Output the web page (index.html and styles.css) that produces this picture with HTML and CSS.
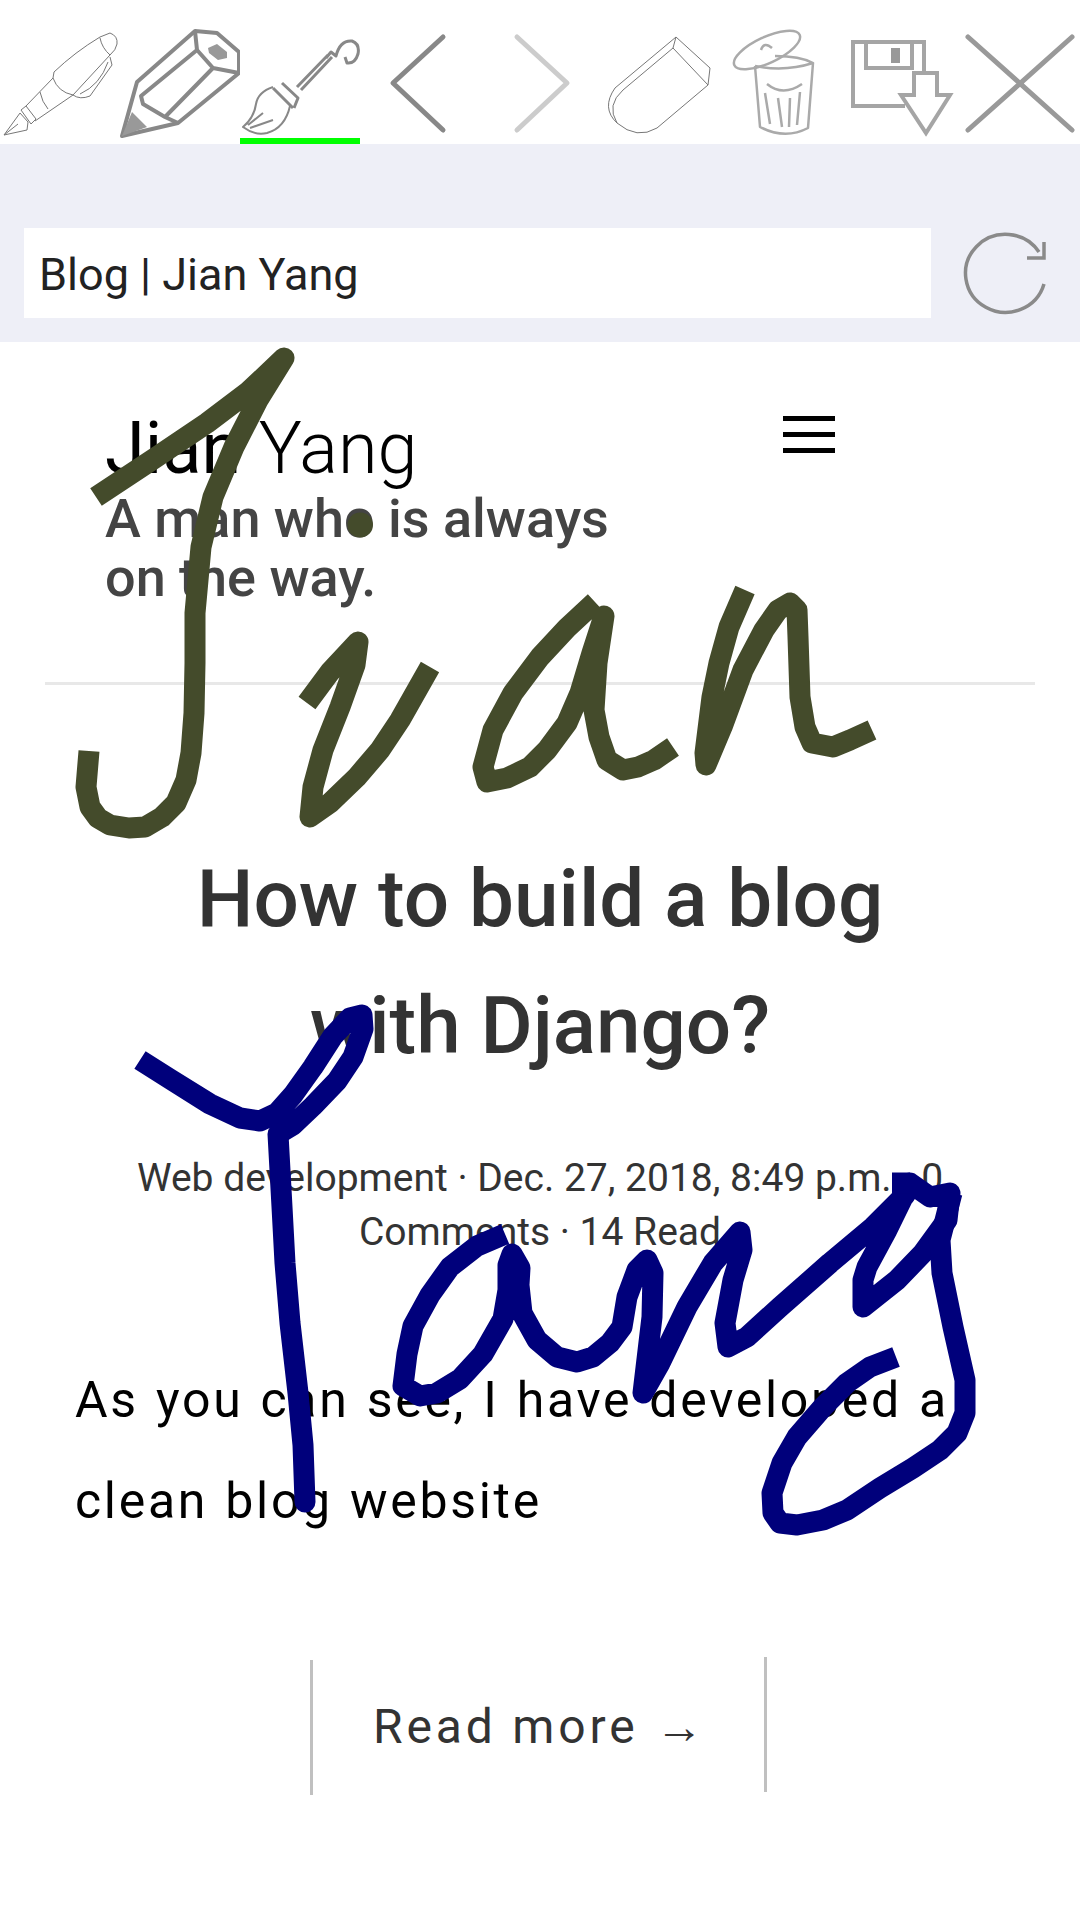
FILE: index.html
```html
<!DOCTYPE html>
<html>
<head>
    <title>Blog | Jian Yang</title>
    <link rel="stylesheet" href="styles.css">
</head>
<body>
    <div id="toolbar">
        <!-- pen -->
        <svg class="tool thin" viewBox="0 0 120 144">
            <path d="M4 135 L20 113 L28 122 L27 130 Z M4 135 L18 124 M21 110 L26 106 L36 119 L31 124 Z M26 106 L53 78 M35 121 L73 95"/>
            <path d="M40 92 Q42 102 48 109 M53 78 L54 72 Q75 52 100 37 L110 33 Q118 36 117 44 Q116 50 110 55 L73 95 Q58 92 53 78"/>
            <path d="M100 38 Q102 48 110 55 M110 57 L112 65 L90 96 Q80 100 73 95 M108 62 Q100 85 80 94"/>
        </svg>
        <!-- pencil -->
        <svg class="tool thick" viewBox="120 0 120 144">
            <path d="M195 31 L217 33 L239 52 L239 73 L178 123 L122 136 L137 82 Z"/>
            <path d="M195 31 L197 50 L213 68 L239 73 M197 50 L141 96 L143 104 L165 117 L178 123 M213 68 L165 117"/>
            <path class="solid" d="M122 136 L132 112 L147 127 Z M208 48 L217 44 L227 52 L227 58 L218 60 L209 53 Z"/>
        </svg>
        <!-- brush -->
        <svg class="tool brush" viewBox="240 0 120 144">
            <path d="M328 55 L297 87 M332 57 L301 90 M326 58 L331 52 L336 56 Q340 40 352 41 Q360 44 358 54 Q355 64 347 63 L345 57"/>
            <path d="M273 88 L293 108 M282 83 L298 98 L294 108"/>
            <path class="head" d="M273 87 Q258 92 256 104 Q254 118 243 127 Q255 136 267 133 Q285 128 290 106 M248 125 L263 113 M250 128 L273 120"/>
        </svg>
        <!-- back -->
        <svg class="tool arrow" viewBox="360 0 120 144">
            <path d="M443 37 L393 83 L443 130"/>
        </svg>
        <!-- forward -->
        <svg class="tool arrow off" viewBox="480 0 120 144">
            <path d="M517 37 L567 83 L517 130"/>
        </svg>
        <!-- eraser -->
        <svg class="tool thin" viewBox="600 0 120 144">
            <path d="M676 37 L710 68 L708 85 L657 128 Q637 140 617 123 Q601 108 615 88 Z"/>
            <path d="M676 37 L673 48 L708 85 M673 48 L623 90 Q606 105 617 123"/>
        </svg>
        <!-- trash -->
        <svg class="tool trash" viewBox="720 0 120 144">
            <ellipse cx="767" cy="50" rx="36" ry="13" transform="rotate(-25 767 50)"/>
            <path d="M761 50 Q764 41 772 48 M755 66 Q785 72 813 63 Q800 56 775 56 M755 66 L760 127 Q785 140 808 128 L813 63"/>
            <path d="M767 84 Q783 97 802 84 M765 93 L770 124 M778 98 L782 127 M790 98 L789 127 M800 92 L797 125"/>
        </svg>
        <!-- save -->
        <svg class="tool save" viewBox="840 0 120 144">
            <path d="M905 106 L853 106 L853 42 L924 42 L924 72 M866 42 L866 68 L912 68 L912 42"/>
            <path d="M914 73 L937 73 L937 95 L950 95 L926 133 L901 95 L914 95 Z"/>
            <rect class="solid" x="891" y="48" width="9" height="15"/>
        </svg>
        <!-- close -->
        <svg class="tool close" viewBox="960 0 120 144">
            <path d="M968 37 L1072 130 M1072 37 L968 130"/>
        </svg>
        <div id="tool-mark"></div>
    </div>

    <div id="address-band">
        <div id="address">Blog | Jian Yang</div>
        <svg id="reload" viewBox="955 222 100 100">
            <path d="M1045 284 A40 39 0 1 1 1040 252 M1045 242 L1045 258 L1028 258"/>
        </svg>
    </div>

    <div id="site-header">
        <div id="brand">
            <h1><b>Jian</b> Yang</h1>
            <p>A man who is always on the way.</p>
        </div>
        <div id="menu-button">
            <span></span>
            <span></span>
            <span></span>
        </div>
    </div>
    <hr id="divider">

    <div id="post">
        <h2>How to build a blog with Django?</h2>
        <p id="post-meta">Web development · Dec. 27, 2018, 8:49 p.m. · 0 Comments · 14 Read</p>
        <p id="post-text">As you can see, I have developed a clean blog website</p>
        <div id="read-more">
            <span class="rule left"></span>
            <span class="label">Read more <i>→</i></span>
            <span class="rule right"></span>
        </div>
    </div>

    <!-- handwriting drawn on top of the page -->
    <svg id="ink" viewBox="0 0 1080 1920">
        <g class="olive">
            <path d="M96 497 L155 458 L207 423 L248 392 L284 358 L258 400 L234 447 L213 497 L201 547 L195 613 L195 663 L194 713 L191 753 L186 780 L176 803 L162 817 L145 827 L129 828 L110 825 L98 818 L90 807 L86 787 L89 751"/>
            <path class="dot" d="M360 525 L360.5 525"/>
            <path d="M307 703 L330 672 L358 642 L355 665 L340 707 L323 750 L313 787 L310 817 L330 803 L357 777 L380 750 L400 720 L430 667"/>
            <path d="M595 602 L567 628 L540 657 L513 693 L493 730 L483 767 L487 782 L507 778 L530 767 L547 750 L567 723 L580 693 L592 653 L604 616 L597 663 L594 710 L599 737 L607 760 L623 770 L638 767 L654 760 L673 747"/>
            <path d="M745 590 L729 627 L719 663 L712 697 L705 753 L706 765 L722 727 L743 670 L764 630 L778 610 L790 603 L797 610 L798 637 L800 697 L805 727 L812 743 L833 747 L850 740 L872 730"/>
        </g>
        <g class="navy">
            <path d="M140 1060 L170 1079 L210 1104 L240 1118 L260 1121 L277 1113 L293 1095 L313 1067 L333 1036 L350 1018 L362 1015 L363 1029 L353 1057 L337 1081 L313 1106 L293 1125 L278 1134"/>
            <path class="round" d="M278 1134 L282 1207 L285 1263 L290 1323 L298 1393 L303 1445 L305 1502"/>
            <path d="M505 1234 L477 1246 L450 1267 L430 1295 L413 1326 L407 1354 L403 1386 L420 1396 L437 1393 L460 1379 L483 1354 L503 1319 L508 1290 L508 1265 L512 1254 L520 1268 L519 1285 L522 1313 L537 1340 L557 1357 L577 1362 L593 1357 L610 1343 L622 1327 L627 1297 L637 1270 L647 1260 L653 1273 L652 1317 L643 1393 L660 1363 L687 1307 L713 1263 L740 1232 L742 1250 L733 1280 L725 1323 L728 1347 L747 1337 L780 1307 L830 1263 L873 1227 L905 1195 L910 1183 L930 1197 L950 1193 L947 1220 L923 1253 L897 1280 L863 1307 L863 1280 L867 1267 L887 1230 L910 1183"/>
            <path d="M892 1183 L910 1183"/>
            <path d="M952 1193 L940 1240 L942 1273 L953 1327 L965 1380 L965 1413 L957 1433 L940 1450 L913 1468 L880 1488 L847 1510 L823 1520 L797 1525 L780 1523 L773 1513 L772 1493 L782 1463 L797 1437 L823 1407 L847 1383 L870 1367 L896 1357"/>
        </g>
    </svg>
</body>
</html>
```

FILE: styles.css
```css
body {
    font-family: Roboto, "Liberation Sans", sans-serif;
    margin: 0;
    padding: 0;
    position: relative;
    width: 1080px;
    height: 1920px;
    overflow: hidden;
    background-color: white;
}
#toolbar {
    display: flex;
    position: relative;
    height: 144px;
}
.tool {
    width: 120px;
    height: 144px;
    flex: none;
    fill: none;
    stroke: #888;
    stroke-linejoin: round;
}
.tool .solid {
    fill: #999;
    stroke: none;
}
.tool.thin {
    stroke: #777;
    stroke-width: 1;
}
.tool.thick {
    stroke-width: 4;
}
.tool.brush {
    stroke-width: 3;
}
.tool.brush .head {
    stroke-width: 2;
}
.tool.arrow {
    stroke-width: 5;
    stroke-linecap: round;
}
.tool.arrow.off {
    stroke: #ccc;
}
.tool.trash {
    stroke: #aaa;
    stroke-width: 2.5;
}
.tool.save {
    stroke: #a5a5a5;
    stroke-width: 4;
    stroke-linejoin: miter;
}
.tool.close {
    stroke: #999;
    stroke-width: 5;
    stroke-linecap: round;
}
#tool-mark {
    position: absolute;
    left: 240px;
    bottom: 0;
    width: 120px;
    height: 6px;
    background-color: #00ff00;
}
#address-band {
    display: flex;
    height: 198px;
    box-sizing: border-box;
    padding: 84px 0 0 24px;
    background-color: #eeeff7;
}
#address {
    width: 892px;
    height: 90px;
    padding-left: 15px;
    background-color: white;
    color: #222;
    font-size: 45px;
    line-height: 94px;
}
#reload {
    width: 100px;
    height: 100px;
    margin: -6px 0 0 23px;
    fill: none;
    stroke: #8a8a8a;
    stroke-width: 3.5;
}
#site-header {
    display: flex;
    padding: 66px 0 0 105px;
}
#brand {
    width: 520px;
}
#brand h1 {
    margin: 0;
    color: black;
    font-size: 72px;
    font-weight: 300;
    line-height: 81px;
}
#brand h1 b {
    font-weight: 400;
}
#brand p {
    margin: 0;
    color: #444;
    font-size: 54px;
    font-weight: 500;
    line-height: 59px;
}
#menu-button {
    display: flex;
    flex-direction: column;
    gap: 11px;
    margin: 8px 0 0 158px;
}
#menu-button span {
    display: block;
    width: 52px;
    height: 5px;
    background-color: black;
}
#divider {
    width: 990px;
    height: 3px;
    margin: 75px 0 0 45px;
    border: none;
    background-color: #e8e8e8;
}
#post {
    padding: 0 76px;
    text-align: center;
}
#post h2 {
    margin: 151px 0 0;
    padding: 0 60px;
    color: #333;
    font-size: 80px;
    font-weight: 500;
    line-height: 127px;
}
#post-meta {
    margin: 61px -20px 0;
    color: #333;
    font-size: 39px;
    line-height: 54px;
}
#post-text {
    margin: 91px 0 0 -1px;
    color: black;
    font-size: 50px;
    letter-spacing: 2.7px;
    word-spacing: 2px;
    line-height: 101px;
    text-align: left;
}
#read-more {
    display: flex;
    margin: 105px 0 0 234px;
    color: #333;
    font-size: 48px;
    letter-spacing: .08em;
    text-align: left;
}
.rule {
    width: 3px;
    height: 135px;
    background-color: #c0c0c0;
}
.rule.left {
    margin-top: 3px;
}
#read-more .label {
    width: 391px;
    padding-left: 60px;
    line-height: 140px;
}
#read-more i {
    font-style: normal;
    margin-left: 1px;
}
#ink {
    position: absolute;
    left: 0;
    top: 0;
    width: 1080px;
    height: 1920px;
    fill: none;
    stroke-width: 21;
    stroke-linejoin: round;
}
#ink .olive {
    stroke: #444b2b;
}
#ink .navy {
    stroke: #00007b;
}
#ink .dot {
    stroke-width: 25;
    stroke-linecap: round;
}
#ink .round {
    stroke-linecap: round;
}
```
